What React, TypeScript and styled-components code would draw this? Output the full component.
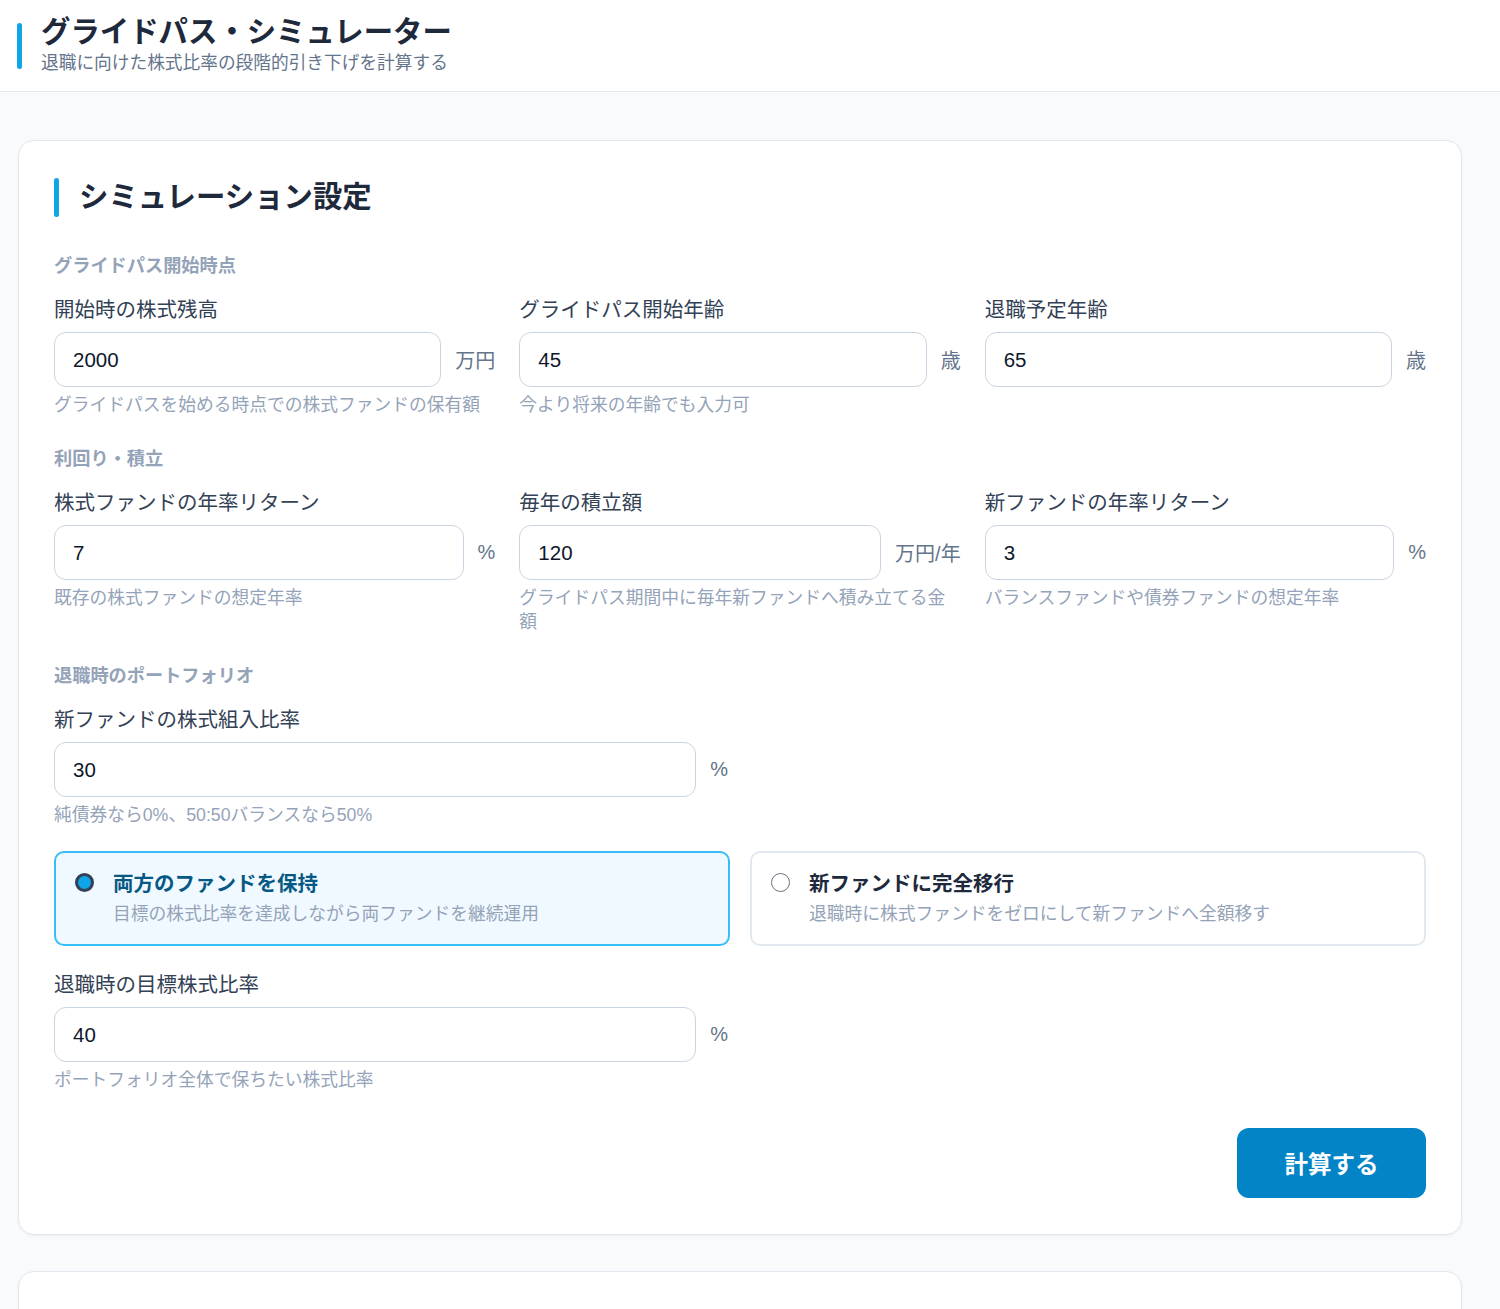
import React, { useState } from 'react';
import styled, { createGlobalStyle } from 'styled-components';

const GlobalStyle = createGlobalStyle`
    body {
        margin: 0;
        background: #f8fafc;
        font-family: "Liberation Sans", "Noto Sans CJK JP", sans-serif;
        color: #1e293b;
    }
    * { box-sizing: border-box; }
`;

const Header = styled.header`
    display: flex;
    align-items: center;
    gap: 19px;
    padding: 14px 17px;
    background: #fff;
    border-bottom: 1px solid #e2e8f0;
`;

const AccentBar = styled.span<{ h: number }>`
    width: 5px;
    height: ${ (p) => p.h }px;
    border-radius: 3px;
    background: #0ea5e9;
    flex-shrink: 0;
`;

const HeaderText = styled.div`
    display: flex;
    flex-direction: column;
`;

const Title = styled.h1`
    margin: 0;
    font-size: 29.4px;
    line-height: 36px;
    font-weight: 700;
    color: #1e293b;
`;

const Subtitle = styled.p`
    margin: 0;
    font-size: 17.7px;
    line-height: 27px;
    color: #64748b;
`;

const Main = styled.main`
    display: flex;
    flex-direction: column;
    gap: 36px;
    padding: 48px 38px 0 18px;
`;

const Card = styled.section<{ tall?: boolean }>`
    background: #fff;
    border: 1px solid #e2e8f0;
    border-radius: 16px;
    box-shadow: 0 1px 3px rgba(15, 23, 42, 0.05);
    padding: 36px 35px;
    min-height: ${ (p) => (p.tall ? '120px' : 'auto') };
`;

const CardTitle = styled.h2`
    display: flex;
    align-items: center;
    gap: 20px;
    margin: 0 0 37px;
    font-size: 29.4px;
    line-height: 40px;
    font-weight: 700;
    color: #1e293b;
`;

const Group = styled.div`
    display: flex;
    flex-direction: column;
    & + & { margin-top: 30px; }
`;

const GroupLabel = styled.div`
    font-size: 18.2px;
    line-height: 24px;
    font-weight: 700;
    color: #94a3b8;
    margin-bottom: 18px;
`;

const Grid = styled.div<{ cols: number; gap?: number }>`
    display: grid;
    grid-template-columns: repeat(${ (p) => p.cols }, minmax(0, 1fr));
    gap: ${ (p) => p.gap ?? 24 }px;
`;

const Field = styled.div<{ spaced?: number }>`
    display: flex;
    flex-direction: column;
    margin-top: ${ (p) => p.spaced ?? 0 }px;
`;

const Label = styled.label`
    font-size: 20.5px;
    line-height: 28px;
    color: #334155;
    margin-bottom: 8px;
`;

const InputRow = styled.div`
    display: flex;
    align-items: center;
    gap: 14px;
`;

const Input = styled.input`
    flex: 1;
    min-width: 0;
    height: 55px;
    padding: 0 18px;
    border: 1px solid #cbd5e1;
    border-radius: 12px;
    background: #fff;
    font-family: inherit;
    font-size: 20.5px;
    color: #0f172a;
    outline: none;
`;

const Unit = styled.span`
    font-size: 20px;
    color: #64748b;
    white-space: nowrap;
`;

const Hint = styled.div`
    margin-top: 6px;
    font-size: 17.75px;
    line-height: 24px;
    color: #94a3b8;
`;

const ModeCard = styled.label<{ active: boolean }>`
    display: flex;
    align-items: flex-start;
    gap: 19px;
    padding: 17px 19px 18px;
    border: 2.5px solid ${ (p) => (p.active ? '#38bdf8' : '#e2e8f0') };
    border-radius: 10px;
    background: ${ (p) => (p.active ? '#f0f9ff' : '#fff') };
    cursor: pointer;
`;

const RadioDot = styled.span<{ active: boolean }>`
    width: 19px;
    height: 19px;
    margin-top: 3px;
    border-radius: 50%;
    flex-shrink: 0;
    border: ${ (p) => (p.active ? '3px solid #334155' : '1.5px solid #6b7280') };
    background: ${ (p) => (p.active ? '#0ea5e9' : '#fff') };
`;

const ModeText = styled.div`
    display: flex;
    flex-direction: column;
    gap: 4px;
`;

const ModeTitle = styled.span<{ active: boolean }>`
    font-size: 20.5px;
    line-height: 28px;
    font-weight: 700;
    color: ${ (p) => (p.active ? '#075985' : '#1e293b') };
`;

const ModeDesc = styled.span`
    font-size: 17.75px;
    line-height: 24px;
    color: #94a3b8;
`;

const Actions = styled.div`
    display: flex;
    justify-content: flex-end;
    margin-top: 36px;
`;

const SubmitButton = styled.button`
    width: 189px;
    height: 70px;
    border: none;
    border-radius: 12px;
    background: #0284c7;
    color: #fff;
    font-family: inherit;
    font-size: 23.5px;
    font-weight: 700;
    cursor: pointer;
`;

type FieldDef = { label: string; value: string; unit: string; hint: string };

const NumberField = (props: FieldDef & { spaced?: number }) => (
    <Field spaced={ props.spaced }>
        <Label>{ props.label }</Label>
        <InputRow>
            <Input type='text' inputMode='decimal' defaultValue={ props.value }/>
            <Unit>{ props.unit }</Unit>
        </InputRow>
        <Hint>{ props.hint }</Hint>
    </Field>
);

const startFields: FieldDef[] = [
    { label: '開始時の株式残高', value: '2000', unit: '万円', hint: 'グライドパスを始める時点での株式ファンドの保有額' },
    { label: 'グライドパス開始年齢', value: '45', unit: '歳', hint: '今より将来の年齢でも入力可' },
    { label: '退職予定年齢', value: '65', unit: '歳', hint: '' },
];

const returnFields: FieldDef[] = [
    { label: '株式ファンドの年率リターン', value: '7', unit: '%', hint: '既存の株式ファンドの想定年率' },
    { label: '毎年の積立額', value: '120', unit: '万円/年', hint: 'グライドパス期間中に毎年新ファンドへ積み立てる金額' },
    { label: '新ファンドの年率リターン', value: '3', unit: '%', hint: 'バランスファンドや債券ファンドの想定年率' },
];

const modes = [
    { key: 'keep', title: '両方のファンドを保持', desc: '目標の株式比率を達成しながら両ファンドを継続運用' },
    { key: 'move', title: '新ファンドに完全移行', desc: '退職時に株式ファンドをゼロにして新ファンドへ全額移す' },
];

const App = () => {
    const [mode, setMode] = useState('keep');

    return (
        <>
            <GlobalStyle/>
            <Header>
                <AccentBar h={ 46 }/>
                <HeaderText>
                    <Title>グライドパス・シミュレーター</Title>
                    <Subtitle>退職に向けた株式比率の段階的引き下げを計算する</Subtitle>
                </HeaderText>
            </Header>
            <Main>
                <Card>
                    <CardTitle>
                        <AccentBar h={ 39 }/>
                        シミュレーション設定
                    </CardTitle>

                    <Group>
                        <GroupLabel>グライドパス開始時点</GroupLabel>
                        <Grid cols={ 3 }>
                            { startFields.map((f) => <NumberField key={ f.label } { ...f }/>) }
                        </Grid>
                    </Group>

                    <Group>
                        <GroupLabel>利回り・積立</GroupLabel>
                        <Grid cols={ 3 }>
                            { returnFields.map((f) => <NumberField key={ f.label } { ...f }/>) }
                        </Grid>
                    </Group>

                    <Group>
                        <GroupLabel>退職時のポートフォリオ</GroupLabel>
                        <Grid cols={ 2 }>
                            <NumberField label='新ファンドの株式組入比率' value='30' unit='%'
                                hint='純債券なら0%、50:50バランスなら50%'/>
                        </Grid>
                        <Field spaced={ 24 }>
                            <Grid cols={ 2 } gap={ 20 }>
                                { modes.map((m) => (
                                    <ModeCard key={ m.key } active={ mode === m.key } onClick={ () => setMode(m.key) }>
                                        <RadioDot active={ mode === m.key }/>
                                        <ModeText>
                                            <ModeTitle active={ mode === m.key }>{ m.title }</ModeTitle>
                                            <ModeDesc>{ m.desc }</ModeDesc>
                                        </ModeText>
                                    </ModeCard>
                                )) }
                            </Grid>
                        </Field>
                        { mode === 'keep' && (
                            <Grid cols={ 2 }>
                                <NumberField spaced={ 25 } label='退職時の目標株式比率' value='40' unit='%'
                                    hint='ポートフォリオ全体で保ちたい株式比率'/>
                            </Grid>
                        ) }
                    </Group>

                    <Actions>
                        <SubmitButton>計算する</SubmitButton>
                    </Actions>
                </Card>
                <Card tall/>
            </Main>
        </>
    );
};

export default App;
